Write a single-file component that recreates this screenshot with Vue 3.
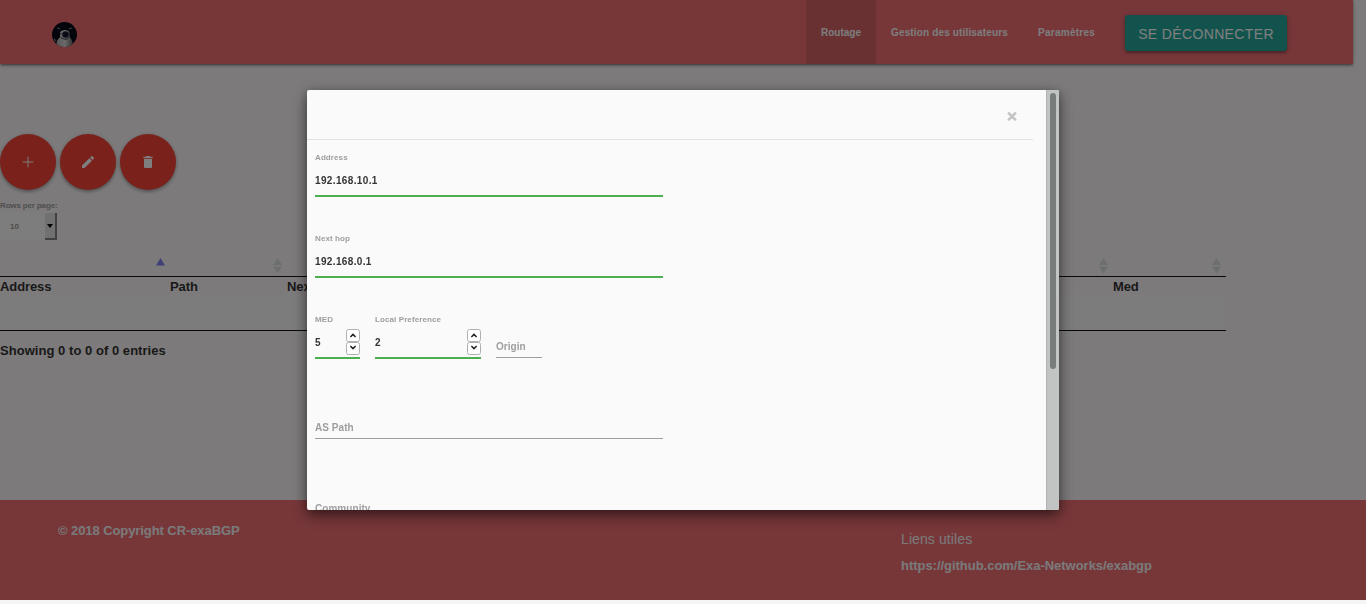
<script setup>
const links = [
  { text: 'Routage', cls: 'active' },
  { text: 'Gestion des utilisateurs', cls: 'users' },
  { text: 'Paramètres', cls: 'settings' },
]
const actions = [
  { name: 'add', d: 'M20 12.7h-7.3V20h-1.4v-7.3H4v-1.4h7.3V4h1.4v7.3H20z' },
  { name: 'edit', d: 'M3 17.25V21h3.75L17.81 9.94l-3.75-3.75L3 17.25zM20.71 7.04a1 1 0 0 0 0-1.41l-2.34-2.34a1 1 0 0 0-1.41 0l-1.83 1.83 3.75 3.75 1.83-1.83z' },
  { name: 'delete', d: 'M6 19c0 1.1.9 2 2 2h8c1.1 0 2-.9 2-2V7H6v12zM19 4h-3.5l-1-1h-5l-1 1H5v2h14V4z' },
]
const columns = ['Address', 'Path', 'Next hop', 'Med']
const numbers = [
  { label: 'MED', value: '5', cls: 'med' },
  { label: 'Local Preference', value: '2', cls: 'pref' },
]
</script>

<template>
  <div class="page">
    <nav class="nav">
      <svg class="logo" width="26" height="26" viewBox="0 0 26 26">
        <defs>
          <clipPath id="disc"><circle cx="13.5" cy="13.5" r="12.5" /></clipPath>
          <linearGradient id="belly" x1="0" x2="1"><stop offset="0" stop-color="#aaa" /><stop offset=".5" stop-color="#d5d5d5" /><stop offset="1" stop-color="#666" /></linearGradient>
        </defs>
        <g clip-path="url(#disc)">
          <rect width="27" height="27" fill="#090919" />
          <path d="M5.5 26C5 20 7 18 9 16.5V11.5Q10 9 14 9T18.5 11.5V16Q22 19 22 26z" fill="url(#belly)" />
          <path d="M6 7l3 1M18 8l3-1M3 18l2 2" stroke="#777788" stroke-width="1.2" />
          <circle cx="14.5" cy="13.5" r="3.2" fill="#141430" />
          <path d="M10 16.5q4.5 3.5 8 0" stroke="#33333f" fill="none" />
          <path d="M10 12v1.6M18 12v1.6" stroke="#33333f" />
        </g>
      </svg>
      <div class="links">
        <a v-for="l in links" :key="l.text" :class="l.cls">{{ l.text }}</a>
        <button class="logout">SE DÉCONNECTER</button>
      </div>
    </nav>

    <main>
      <div class="actions">
        <button v-for="a in actions" :key="a.name">
          <svg width="16" height="16" viewBox="0 0 24 24"><path :d="a.d" /></svg>
        </button>
      </div>
      <div class="rows-label">Rows per page:</div>
      <div class="select"><span>10</span><i><b></b></i></div>
      <div class="table">
        <div class="thead">
          <div v-for="(c, i) in columns" :key="c">
            <svg v-if="i === 0" width="9" height="16"><path d="M0 7.5L4.5 0 9 7.5z" fill="#8080f0" /></svg>
            <svg v-else width="9" height="16"><path d="M0 7L4.5 0 9 7zM0 8.5h9L4.5 15.5z" fill="#dadcdd" /></svg>
          </div>
        </div>
        <div class="names"><div v-for="c in columns" :key="c">{{ c }}</div></div>
        <div class="empty"></div>
      </div>
      <div class="info">Showing 0 to 0 of 0 entries</div>
    </main>

    <footer>
      <div class="copy">© 2018 Copyright CR-exaBGP</div>
      <div class="useful">
        <h5>Liens utiles</h5>
        <a>https://github.com/Exa-Networks/exabgp</a>
      </div>
    </footer>
  </div>

  <div class="overlay">
    <div class="modal">
      <div class="content">
        <header><span>×</span></header>
        <div class="field"><label>Address</label><div class="value">192.168.10.1</div></div>
        <div class="field"><label>Next hop</label><div class="value">192.168.0.1</div></div>
        <div class="group">
          <div v-for="n in numbers" :key="n.label" class="field" :class="n.cls">
            <label>{{ n.label }}</label>
            <div class="value">{{ n.value }}
              <span class="spin">
                <svg width="14" height="13" viewBox="0 0 14 13"><rect x=".5" y=".5" width="13" height="12" rx="2" /><path d="M4.4 8L7 5.4 9.6 8" /></svg>
                <svg width="14" height="13" viewBox="0 0 14 13"><rect x=".5" y=".5" width="13" height="12" rx="2" /><path d="M4.4 4L7 6.6 9.6 4" /></svg>
              </span>
            </div>
          </div>
          <div class="field origin"><div class="blank">Origin</div></div>
        </div>
        <div class="field"><div class="blank">AS Path</div></div>
        <div class="field"><div class="blank">Community</div></div>
      </div>
      <div class="scroll"><div></div></div>
    </div>
  </div>
</template>

<style>
html, body { margin: 0; overflow: hidden; background: #f5f5f5; }
</style>

<style scoped>
* { box-sizing: border-box; }
.page { height: 600px; display: flex; flex-direction: column; background: #f9f5f6; font: bold 13px/18px "Liberation Sans", Arial, sans-serif; color: #333; }
button { border: 0; padding: 0; font-family: inherit; }
.nav { width: 1353px; height: 64px; flex: none; display: flex; justify-content: space-between; padding: 0 66px 0 51px; background: #ee6e73; box-shadow: 0 2px 2px 0 rgba(0,0,0,.14), 0 3px 1px -2px rgba(0,0,0,.12), 0 1px 5px 0 rgba(0,0,0,.2), 0 1px 2px rgba(0,0,0,.15); }
.logo { margin-top: 21px; }
.links { display: flex; align-items: center; height: 64px; }
.links a { height: 64px; padding: 0 15px; font-size: 10px; line-height: 65px; color: #fafafa; white-space: nowrap; }
.links .active { width: 70px; background: #d26265; }
.links .users { width: 147px; letter-spacing: .15px; }
.links .settings { width: 87px; letter-spacing: .26px; }
.logout { width: 162px; height: 36px; margin: 2px 0 0 15px; border-radius: 3px; background: #26a69a; color: #fff; font-size: 14px; line-height: 38px; letter-spacing: .36px; white-space: nowrap; box-shadow: 0 2px 2px rgba(0,0,0,.2), 0 1px 5px rgba(0,0,0,.25); }
main { flex: none; height: 436px; padding-top: 70px; }
.actions { display: flex; gap: 4px; }
.actions button { width: 56px; height: 56px; border-radius: 50%; background: #f44336; display: flex; align-items: center; justify-content: center; box-shadow: 0 2px 3px rgba(0,0,0,.2), 0 1px 5px rgba(0,0,0,.2); }
.actions svg { fill: #fff; }
.rows-label { margin-top: 10px; height: 12px; font-size: 8px; line-height: 11px; letter-spacing: -.15px; color: #9e9e9e; }
.select { width: 57px; height: 28px; display: flex; justify-content: space-between; background: #fbfbfb; font-size: 8px; line-height: 29px; color: #999; padding-left: 10px; }
.select i { width: 12px; height: 27px; margin-top: 1px; background: #e0e2e0; border-right: 2px solid #808280; border-bottom: 2px solid #808280; display: flex; align-items: center; justify-content: center; }
.select b { border: 3px solid transparent; border-top: 4px solid #000; border-bottom: 0; }
.table { width: 1226px; margin-top: 9px; }
.thead, .names { display: grid; grid-template-columns: 170px 117px 826px 113px; }
.thead { height: 28px; border-bottom: 1px solid #111; }
.thead div { display: flex; justify-content: flex-end; padding: 9px 5px 0 0; }
.names { height: 18px; line-height: 19px; letter-spacing: -.1px; }
.empty { height: 36px; background: #f8f9f8; border-bottom: 1px solid #111; }
.info { margin-top: 11px; letter-spacing: .04px; }
footer { flex: none; height: 100px; background: #ee6e73; display: flex; color: #f5f5f5; padding-left: 58px; }
.copy { width: 843px; padding-top: 22px; letter-spacing: -.08px; }
h5 { margin: 30px 0 9px; font-size: 14px; line-height: 18px; font-weight: 400; letter-spacing: .1px; }
.useful a { display: block; letter-spacing: -.03px; }
.overlay { position: fixed; top: 0; left: 0; width: 100%; height: 600px; background: rgba(0,0,0,.5); display: flex; justify-content: center; padding-top: 90px; font: bold 10px/12px "Liberation Sans", Arial, sans-serif; }
.modal { width: 752px; height: 420px; display: flex; background: #fafafa; border-radius: 2px; overflow: hidden; box-shadow: 0 5px 15px rgba(0,0,0,.5), 0 2px 8px rgba(0,0,0,.2); }
.content { width: 739px; height: 420px; overflow: hidden; }
header { width: 726px; height: 50px; border-bottom: 1px solid #e3e3e3; display: flex; justify-content: flex-end; padding: 17px 16px 0 0; font-size: 17px; line-height: 20px; color: #c4c4c4; -webkit-text-stroke: .6px #c4c4c4; }
.field { width: 348px; height: 81px; margin-left: 8px; padding-top: 12px; flex: none; }
label { display: block; height: 12px; font-size: 8px; line-height: 12px; color: #9e9e9e; letter-spacing: .1px; }
.value { position: relative; height: 33px; border-bottom: 2px solid #4caf50; line-height: 33px; letter-spacing: .36px; color: #333; }
.blank { height: 38px; margin-top: -1px; padding-top: 21px; border-bottom: 1px solid #9e9e9e; color: #9e9e9e; letter-spacing: .05px; }
.group { display: flex; gap: 15px; padding-left: 8px; }
.group .field { margin-left: 0; }
.group .med { width: 45px; }
.group .pref { width: 106px; }
.group .origin { width: 46px; padding-top: 19px; }
.content > .group ~ .field { padding-top: 19px; }
.spin { position: absolute; right: 0; top: 3px; display: flex; flex-direction: column; }
.spin svg { fill: #fff; stroke: #b0b0b0; }
.spin path { fill: none; stroke: #222; stroke-width: 1.5; }
.scroll { width: 13px; height: 420px; padding: 3px 0 0 3px; background: #c2c4c3; border-left: 1px solid #b1b3b2; }
.scroll div { width: 6px; height: 276px; border-radius: 3px; background: #787c7b; }
</style>
